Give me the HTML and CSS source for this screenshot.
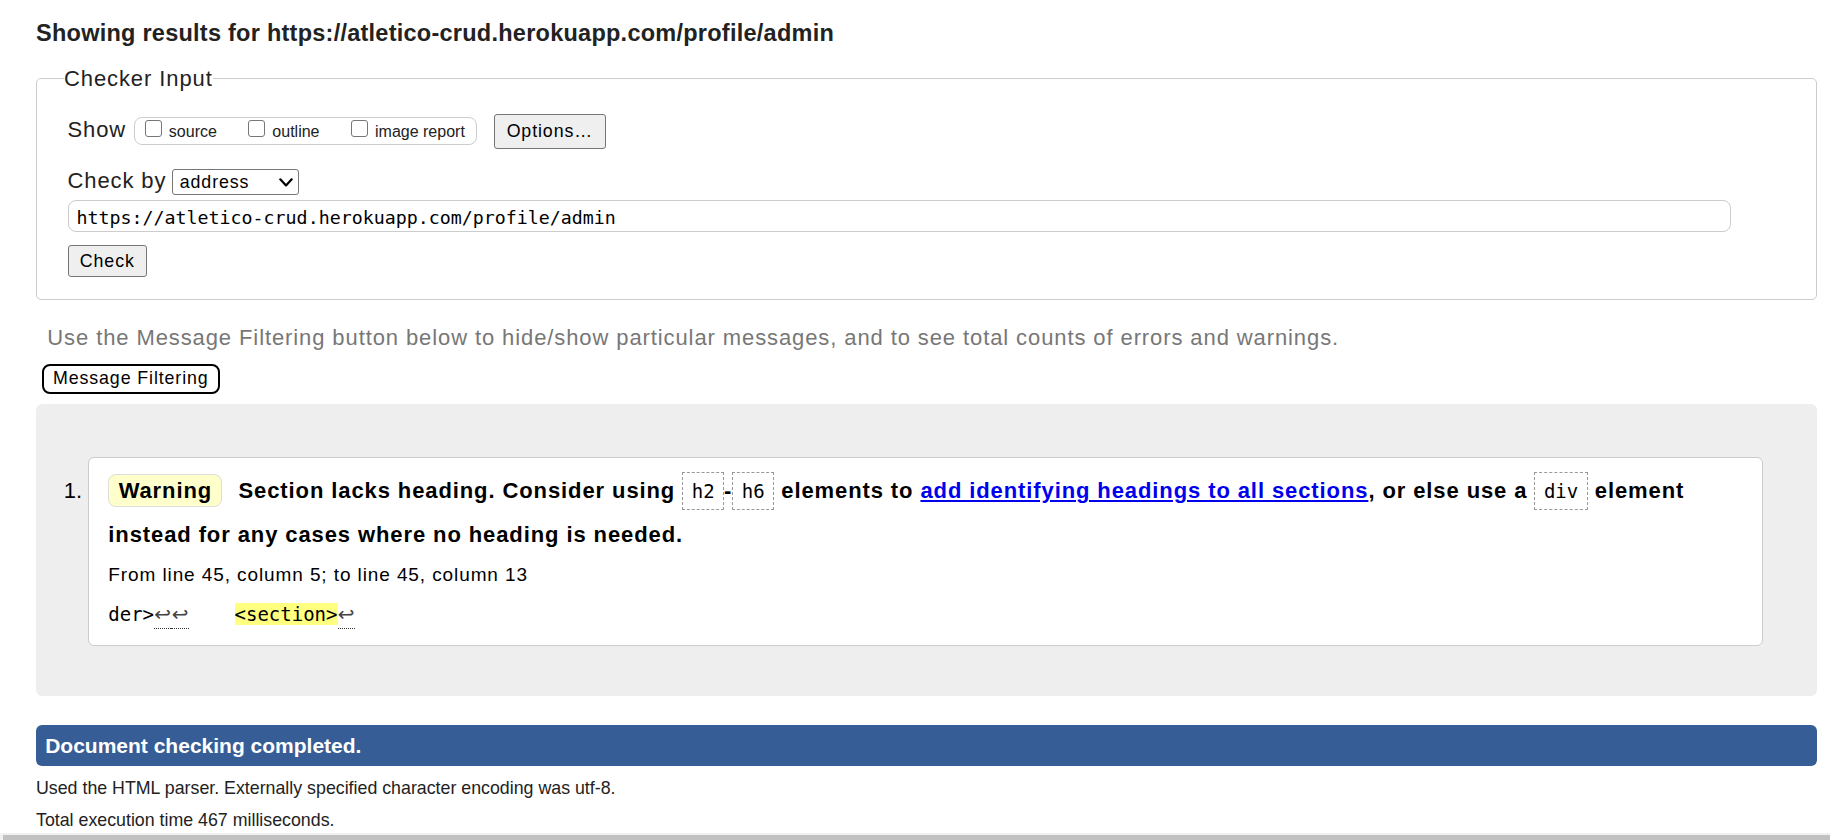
FILE: index.html
```html
<!DOCTYPE html>
<html lang="en">
<head>
<meta charset="utf-8">
<title>Showing results for https://atletico-crud.herokuapp.com/profile/admin - Nu Html Checker</title>
<link rel="stylesheet" href="styles.css">
</head>
<body>
<div class="page">
  <h2 class="results-title">Showing results for https://atletico-crud.herokuapp.com/profile/admin</h2>
  <form class="checker">
    <fieldset class="checker-input">
      <legend>Checker Input</legend>
      <div class="show-row">
        <span class="row-label show-label">Show</span>
        <span class="show-group">
          <label class="opt"><input type="checkbox" class="cb"><span class="opt-text">source</span></label>
          <label class="opt"><input type="checkbox" class="cb"><span class="opt-text">outline</span></label>
          <label class="opt"><input type="checkbox" class="cb"><span class="opt-text">image report</span></label>
        </span>
        <button type="button" class="btn btn-options">Options…</button>
      </div>
      <div class="checkby-row">
        <span class="row-label checkby-label">Check by</span>
        <span class="select-wrap">
          <select class="select"><option>address</option></select>
          <svg class="chev" viewBox="0 0 14 9" width="14" height="9" aria-hidden="true"><polyline points="1.3,1.3 7,7.4 12.7,1.3" fill="none" stroke="#000" stroke-width="2.2" stroke-linecap="round" stroke-linejoin="round"/></svg>
        </span>
      </div>
      <input class="url" type="url" value="https://atletico-crud.herokuapp.com/profile/admin">
      <button type="button" class="btn btn-check">Check</button>
    </fieldset>
  </form>
  <p class="filter-hint">Use the Message Filtering button below to hide/show particular messages, and to see total counts of errors and warnings.</p>
  <button type="button" class="btn-filter">Message Filtering</button>
  <div class="results">
    <ol class="messages">
      <li class="msg">
        <p class="msg-text"><strong class="badge">Warning</strong> Section lacks heading. Consider using <code>h2</code>-<code>h6</code> elements to <a href="#">add identifying headings to all sections</a>, or else use a <code>div</code> element instead for any cases where no heading is needed.</p>
        <p class="location">From line 45, column 5; to line 45, column 13</p>
        <p class="extract"><code>der&gt;<b class="lf" title="Line break">↩</b><b class="lf" title="Line break">↩</b>    <mark class="hl">&lt;section&gt;</mark><b class="lf" title="Line break">↩</b></code></p>
      </li>
    </ol>
  </div>
  <p class="summary">Document checking completed.</p>
  <p class="note">Used the HTML parser. Externally specified character encoding was utf-8.</p>
  <p class="note">Total execution time 467 milliseconds.</p>
</div>
<div class="hscroll"><div class="hscroll-thumb"></div></div>
</body>
</html>
```

FILE: styles.css
```css
* { box-sizing: border-box; }

html, body {
  margin: 0;
  padding: 0;
  overflow: hidden;
  background: #fff;
}

body {
  font-family: "Liberation Sans", Arial, sans-serif;
  color: #222;
}

.page {
  margin-left: 36px;
  width: 1781px;
}

.results-title {
  margin: 18.5px 0 17.5px;
  font-size: 23.5px;
  line-height: 28px;
  font-weight: bold;
  letter-spacing: 0.25px;
  color: #222;
}

.checker { margin: 0; }

.checker-input {
  margin: 0;
  min-width: 0;
  border: 1px solid #ccc;
  border-radius: 5px;
  padding: 22px 0 22.6px 30.5px;
}

.checker-input legend {
  margin-left: -3.5px;
  padding: 1px 0 0;
  font-size: 22px;
  line-height: 27px;
  letter-spacing: 0.9px;
}

.row-label {
  font-size: 22px;
  letter-spacing: 0.9px;
}

.show-row {
  display: flex;
  align-items: baseline;
}

.show-label { margin-right: 7.7px; }

.show-group {
  display: inline-flex;
  align-items: baseline;
  gap: 31.5px;
  border: 1px solid #ccc;
  border-radius: 8px;
  padding: 2px 11px 2.6px 10px;
  margin-right: 17px;
}

.opt {
  display: inline-flex;
  align-items: baseline;
  font-size: 16px;
}

.cb {
  -webkit-appearance: none;
  appearance: none;
  align-self: flex-start;
  width: 17px;
  height: 17px;
  margin: 0 7px 0 0;
  border: 1px solid #767676;
  border-radius: 3px;
  background: #fff;
}

.opt-text { margin-top: 3px; }

.btn {
  font-family: "Liberation Sans", Arial, sans-serif;
  font-size: 17.8px;
  line-height: normal;
  letter-spacing: 0.9px;
  color: #000;
  background: #efefef;
  border: 1px solid #767676;
  border-radius: 3px;
}

.btn-options { padding: 6.3px 11.8px 5.3px; }

.checkby-row {
  display: flex;
  align-items: baseline;
  margin-top: 19.7px;
}

.checkby-label { margin-right: 5.7px; }

.select-wrap {
  position: relative;
  display: flex;
}

.select {
  -webkit-appearance: none;
  appearance: none;
  width: 127px;
  height: 26px;
  margin: 0;
  padding: 0 0 0 6.7px;
  border: 1px solid #767676;
  border-radius: 3px;
  background: #fff;
  color: #000;
  font-family: "Liberation Sans", Arial, sans-serif;
  font-size: 17.8px;
  letter-spacing: 0.9px;
}

.chev {
  position: absolute;
  right: 6.6px;
  top: 9px;
  pointer-events: none;
}

.url {
  display: block;
  margin: 4.3px 0 0;
  width: 1663.7px;
  height: 32.4px;
  padding: 3px 8px 0;
  border: 1px solid #ccc;
  border-radius: 8px;
  font-family: "DejaVu Sans Mono", "Liberation Mono", monospace;
  font-size: 18.3px;
  color: #000;
  background: #fff;
}

.btn-check {
  display: block;
  margin-top: 12.6px;
  padding: 5.6px 11.35px 3.35px;
}

.filter-hint {
  margin: 24.45px 0 0 11.3px;
  font-size: 22px;
  letter-spacing: 0.9px;
  color: #777;
}

.btn-filter {
  display: block;
  margin: 13.7px 0 0 5.7px;
  padding: 2.25px 9.3px;
  border: 2px solid #000;
  border-radius: 8px;
  background: #fff;
  color: #000;
  font-family: "Liberation Sans", Arial, sans-serif;
  font-size: 17.8px;
  line-height: normal;
  letter-spacing: 0.9px;
}

.results {
  margin-top: 10.5px;
  background: #eee;
  border-radius: 6px;
  padding: 53.2px 54px 50px 52.3px;
}

.messages {
  margin: 0;
  padding: 0;
  list-style: decimal outside;
}

.msg {
  background: #fff;
  border: 1px solid #ccc;
  border-radius: 6px;
  padding: 11px 19px 19.2px;
  color: #000;
}

.msg::marker {
  font-size: 22px;
  font-weight: normal;
  color: #000;
}

.msg-text {
  margin: 0;
  font-size: 22px;
  font-weight: bold;
  line-height: 44px;
  letter-spacing: 0.9px;
}

.badge {
  background: #ffc;
  border: 1px solid #ddd;
  border-radius: 8px;
  padding: 3px 9.35px 2.7px;
  margin-right: 9px;
}

.msg-text code {
  font-family: "DejaVu Sans Mono", "Liberation Mono", monospace;
  font-weight: normal;
  font-size: 19px;
  line-height: 22px;
  letter-spacing: 0;
  color: #000;
  border: 1px dashed #999;
  padding: 7.2px 8.5px 6.1px;
}

.msg-text a {
  color: #00e;
  text-decoration: underline;
}

.location {
  margin: 6.8px 0 0;
  font-size: 19px;
  letter-spacing: 0.9px;
}

.extract {
  margin: 15.65px 0 0;
  font-family: "DejaVu Sans Mono", "Liberation Mono", monospace;
  font-size: 19px;
  white-space: pre;
  color: #000;
}

.extract code {
  font-family: inherit;
  font-size: inherit;
}

.lf {
  font-family: "DejaVu Sans", sans-serif;
  font-size: 20px;
  font-weight: normal;
  color: #444;
  padding: 0 0.3px 2px;
  border-bottom: 1px dotted #333;
}

.hl {
  background: #ffff80;
  color: #000;
}

.summary {
  margin: 28.5px 0 0;
  height: 41.7px;
  line-height: 41.7px;
  padding: 0 9.2px;
  background: #365d95;
  color: #fff;
  font-weight: bold;
  font-size: 21px;
  border-radius: 6px;
}

.note {
  margin: 11.5px 0 0;
  font-size: 17.8px;
  color: #222;
}

.note + .note { margin-top: 11.5px; }

.hscroll {
  position: fixed;
  left: 0;
  right: 0;
  bottom: 0;
  height: 7px;
  padding: 1.5px 0 0 3px;
  background: #f1f1f1;
}

.hscroll-thumb {
  height: 5.5px;
  background: #c1c1c1;
}
```
